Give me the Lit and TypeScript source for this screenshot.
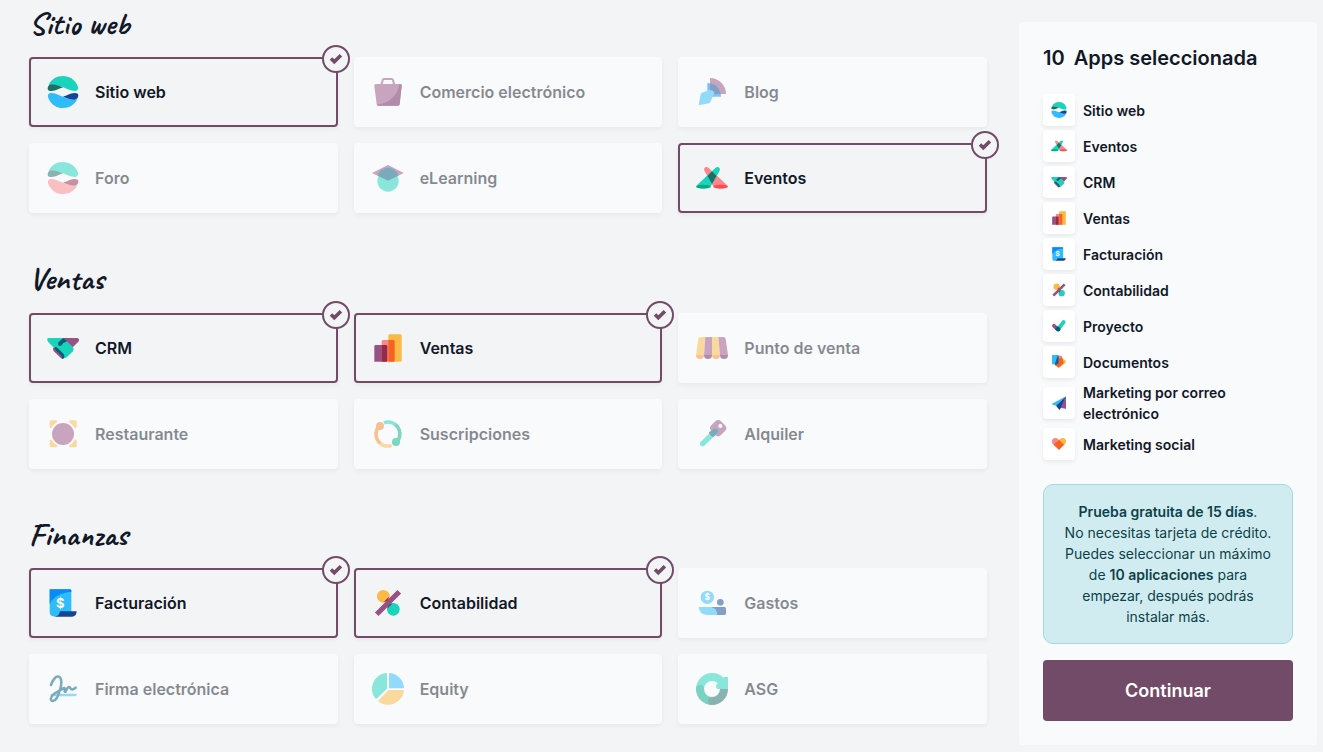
import { LitElement, html, css, svg, TemplateResult } from "lit";
import { customElement, property } from "lit/decorators.js";
import { classMap } from "lit/directives/class-map.js";

const PURPLE = "#985184";
const TEAL = "#1AD3BB";
const GREEN = "#00AC86";
const YELLOW = "#FBB945";
const BLUE = "#2EBCFA";
const AZURE = "#088BF5";
const NAVY = "#144496";
const PINK = "#FC868B";
const ORANGE = "#F86126";
const WINE = "#962B48";
const PETROL = "#005E7A";
const FOREST = "#1A6F66";

const globe = (bottom: string, shade: string) => {
  const dome =
    "M5 27C12 10 29 0 48 0s36 11 43 28c5 10 1 17-7 17C70 45 62 39 48 34 34 29 18 22 5 27z";
  const fold = "M2 38c0-8 5-13 12-13 12 0 22 5 34 9.500C36 37 27 44 14 45 6 45 2 43 2 38z";
  return svg`
    <path d=${dome} fill=${TEAL} /><path d=${fold} fill=${FOREST} />
    <g transform="rotate(180 48 48)"><path d=${dome} fill=${bottom} /><path d=${fold} fill=${shade} /></g>`;
};

const ICONS: Record<string, TemplateResult> = {
  website: globe(BLUE, NAVY),
  forum: globe(PINK, WINE),
  shop: svg`
    <path d="M28 28 32 12Q33 9 36 9H59Q62 9 63 12L67 28" fill="none" stroke=${PURPLE} stroke-width="6" />
    <path d="M11 24H85Q90 24 89 29L83 85Q82 89 78 89H19Q15 89 14 85L7 29Q7 24 11 24z" fill=${PURPLE} />
    <path d="M83 24H85Q90 24 89 29L83 85Q82 89 78 89H19Q15 89 14 86C49 84 77 60 83 24z" fill="#6B1F58" />`,
  blog: svg`
    <path d="M42 6A48 48 0 0 1 90 54H42z" fill=${PURPLE} />
    <path d="M34 21A41 41 0 0 1 75 62H34z" fill=${AZURE} />
    <path d="M42 22A41 41 0 0 1 74 54H42z" fill=${NAVY} />
    <path d="M8 88 14 54Q15 51 18 50L38 43Q51 40 55 50L43 78Q42 81 39 82z" fill=${BLUE} />`,
  learning: svg`
    <path d="M0 33 48 9 95 33 48 56z" fill=${PURPLE} />
    <circle cx="48" cy="57" r="32" fill=${TEAL} />
    <path d="M17 41.500A32 32 0 0 1 79 41.500L48 56z" fill=${PETROL} />`,
  events: svg`
    <path d="M25 26C21 16 32 11 38 18L95 71 53 75z" fill=${PINK} />
    <path d="M71 26C75 16 64 11 58 18L1 71 43 75z" fill=${TEAL} />
    <path d="M48 28 61.500 42 48 65 34.500 42z" fill=${FOREST} />
    <ellipse cx="74" cy="74" rx="22" ry="6" fill="#FF4A50" />
    <ellipse cx="22" cy="74" rx="22" ry="6" fill=${GREEN} />`,
  crm: svg`
    <path d="M46 18H90Q100 20 94 29L77 46z" fill=${PURPLE} />
    <path d="M25 53 46 73" stroke=${PURPLE} stroke-width="13" stroke-linecap="round" />
    <path d="M6 18H49L58 27 78 46Q83 52 78 58L60 75Q54 80 48 76L3 29Q-3 18 6 18z" fill=${TEAL} />
    <path d="M22 50 46 73" stroke=${PURPLE} stroke-width="7" stroke-linecap="round" />
    <path d="M27 49 47 69Q50 73 48 76" fill="none" stroke=${PETROL} stroke-width="8" stroke-linecap="round" />
    <path d="M49 18 60 28 48 34 44 40Q38 45 34 40 31 35 35 30z" fill=${PETROL} />`,
  sales: svg`
    <path d="M11 39H46V89H7V43Q7 39 11 39z" fill=${PURPLE} />
    <path d="M33 24H68V89H29V28Q29 24 33 24z" fill=${PINK} />
    <path d="M53 7H85Q89 7 89 11V85Q89 89 85 89H49V11Q49 7 53 7z" fill=${YELLOW} />
    <path d="M29 39H42Q46 39 46 43V85Q46 89 42 89H29z" fill=${WINE} />
    <path d="M49 24H64Q68 24 68 28V85Q68 89 64 89H49z" fill=${ORANGE} />`,
  pos: svg`
    <path d="M14 15H28L24 69H0L7 21Q8 15 14 15z" fill=${YELLOW} />
    <path d="M28 15H48V69H24z" fill=${PURPLE} /><path d="M48 15H67L72 69H48z" fill=${YELLOW} />
    <path d="M67 15H82Q88 15 89 21L96 69H72z" fill=${PURPLE} />
    <path d="M0 69H24A12 12 0 0 1 0 69z" fill="#FC8A2F" /><path d="M24 69H48A12 12 0 0 1 24 69z" fill="#6B1F58" />
    <path d="M48 69H72A12 12 0 0 1 48 69z" fill="#FC8A2F" /><path d="M72 69H96A12 12 0 0 1 72 69z" fill="#6B1F58" />`,
  restaurant: svg`
    <g fill=${YELLOW}>
      ${[0, 90, 180, 270].map(
        (a) => svg`<path transform="rotate(${a} 48.5 47.500)" d="M8 27V12Q8 7 13 7H28Q33 8 30 13 19 19 14 29 9 32 8 27z" />`
      )}
    </g>
    <circle cx="48" cy="48" r="33" fill=${PURPLE} />`,
  subscriptions: svg`
    <g fill="none" stroke-width="10.500">
      <path d="M36 14.500A35.500 35.500 0 0 1 72 21" stroke=${TEAL} />
      <path d="M70 20A35.500 35.500 0 0 1 75 71" stroke="#00B389" />
      <path d="M59 82A35.500 35.500 0 0 1 23 74" stroke=${YELLOW} />
      <path d="M25 76A35.500 35.500 0 0 1 21 25" stroke="#F58A2A" />
    </g>
    <circle cx="72" cy="72" r="12" fill="#00B389" /><circle cx="24" cy="24" r="12" fill="#F58A2A" />`,
  rental: svg`
    <rect x="46" y="10" width="41" height="41" rx="12" transform="rotate(45 66.500 30.500)" fill=${PURPLE} />
    <circle cx="73" cy="24" r="6" fill="#F9FAFC" />
    <path d="M20 77 58 40" stroke=${TEAL} stroke-width="16" stroke-linecap="round" />
    <path d="M39 43 53 33C63 28 71 39 63 47L52 57Q40 53 39 43z" fill=${PETROL} />`,
  invoicing: svg`
    <path d="M8 7H69Q73 7 73 11V76H41Q40 89 25 89 8 89 8 76z" fill=${BLUE} />
    <path d="M8 7H69Q73 7 73 11V15C42 16 18 30 8 51z" fill=${AZURE} />
    <path d="M39 73H89Q88 89 75 89H24Q37 87 39 73z" fill=${NAVY} />
    <text x="40" y="62" font-size="39" font-weight="700" text-anchor="middle" fill="#fff">$</text>`,
  accounting: svg`
    <circle cx="34" cy="28" r="19" fill=${YELLOW} /><circle cx="64" cy="67" r="19" fill=${TEAL} />
    <path d="M19.600 76.400 76.400 19.600" stroke=${PURPLE} stroke-width="15.500" stroke-linecap="square" />
    <path d="M35 45A19 19 0 0 0 51 29z" fill=${WINE} />
    <path d="M46 65A19 19 0 0 1 62 49z" fill="#3B5379" />`,
  expenses: svg`
    <circle cx="34" cy="31" r="20" fill=${BLUE} />
    <text x="34" y="40" font-size="25" font-weight="700" text-anchor="middle" fill="#fff">$</text>
    <circle cx="73" cy="46" r="10" fill=${NAVY} />
    <path d="M47 60H85Q90 60 90 65V79Q90 84 85 84H51z" fill=${NAVY} />
    <path d="M8 60H45Q63 63 64 84H33Q10 83 8 60z" fill=${BLUE} />`,
  sign: svg`
    <path d="M14 66H85" stroke=${BLUE} stroke-width="8" stroke-linecap="round" />
    <path d="M12 36C18 19 27 8 35 11 46 15 44 36 39 50 34 70 27 83 18 84 8 84 10 70 22 62L46 48Q54 42 53 49 52 58 56 56C60 45 66 39 69 44 72 52 78 50 86 44"
      fill="none" stroke=${PETROL} stroke-width="7.500" stroke-linecap="round" stroke-linejoin="round" />`,
  equity: svg`
    <path d="M45 3V44Q45 47 43 49L15 76Q13 78 10 76A47.500 47.500 0 0 1 42 0Q45 0 45 3z" fill=${TEAL} />
    <path d="M51 3Q51 0 54 0A48 48 0 0 1 96 43Q96 46 93 46H51z" fill=${BLUE} />
    <path d="M50 51H93Q96 51 96 54A48 48 0 0 1 20 86Q18 84 20 82z" fill=${YELLOW} />`,
  esg: svg`
    <path d="M48 12A36 36 0 0 0 12 48" fill="none" stroke=${TEAL} stroke-width="24" />
    <path d="M12 48A36 36 0 0 0 48 84" fill="none" stroke="#00AC86" stroke-width="24" />
    <path d="M48 84A36 36 0 0 0 84 48" fill="none" stroke=${FOREST} stroke-width="24" />
    <circle cx="48" cy="84" r="12" fill=${FOREST} /><circle cx="12" cy="48" r="12" fill="#00AC86" />
    <path d="M48 0C63 0 74 6 82 14Q88 9 96 13V48H66Q59 46 60 38L65 31Q59 24 48 24z" fill=${TEAL} />`,
  project: svg`
    <path d="M18 47 40 67" stroke=${PURPLE} stroke-width="23" stroke-linecap="round" />
    <path d="M43 67 76 24" stroke=${TEAL} stroke-width="23" stroke-linecap="round" />
    <path d="M29 60 39 50Q55 54 58 69L51 78Q43 85 34 77L24 67z" fill=${PETROL} />`,
  documents: svg`
    <path d="M46 84 86 54Q92 48 87 41L62 20z" fill=${YELLOW} />
    <path d="M40 14 58 10Q64 12 66 18L76 52Q77 56 73 59L46 82 22 66z" fill=${ORANGE} />
    <path d="M44 8 58 10Q64 12 66 20L44 30z" fill=${PINK} />
    <path d="M10 6H42Q46 6 46 11V52Q42 64 28 62H6V10Q6 6 10 6z" fill=${BLUE} />
    <path d="M38 14H46V54Q41 64 22 66z" fill="#235C87" />`,
  email: svg`
    <path d="M90 7 6 52Q5 55 8 57L30 65z" fill=${BLUE} />
    <path d="M90 7V80Q90 84 86 83L56 76z" fill=${PURPLE} />
    <path d="M90 7 30 65 50 88Q54 90 56 84z" fill=${NAVY} />`,
  social: svg`
    <path d="M48 24Q38 9 22 12C4 17 0 37 14 51L27 63 64 26z" fill=${PINK} />
    <path d="M48 24Q58 9 74 12C92 17 96 37 82 51L69 63 32 26z" fill=${YELLOW} />
    <path d="M48 22 78 52 50 82Q48 84 46 82L16 52z" fill=${ORANGE} />`,
};

interface App {
  icon: string;
  name: string;
  on?: boolean;
}

const GROUPS: { title: string; apps: App[] }[] = [
  {
    title: "Sitio web",
    apps: [
      { icon: "website", name: "Sitio web", on: true },
      { icon: "shop", name: "Comercio electrónico" },
      { icon: "blog", name: "Blog" },
      { icon: "forum", name: "Foro" },
      { icon: "learning", name: "eLearning" },
      { icon: "events", name: "Eventos", on: true },
    ],
  },
  {
    title: "Ventas",
    apps: [
      { icon: "crm", name: "CRM", on: true },
      { icon: "sales", name: "Ventas", on: true },
      { icon: "pos", name: "Punto de venta" },
      { icon: "restaurant", name: "Restaurante" },
      { icon: "subscriptions", name: "Suscripciones" },
      { icon: "rental", name: "Alquiler" },
    ],
  },
  {
    title: "Finanzas",
    apps: [
      { icon: "invoicing", name: "Facturación", on: true },
      { icon: "accounting", name: "Contabilidad", on: true },
      { icon: "expenses", name: "Gastos" },
      { icon: "sign", name: "Firma electrónica" },
      { icon: "equity", name: "Equity" },
      { icon: "esg", name: "ASG" },
    ],
  },
];

const SELECTED: App[] = [
  { icon: "website", name: "Sitio web" },
  { icon: "events", name: "Eventos" },
  { icon: "crm", name: "CRM" },
  { icon: "sales", name: "Ventas" },
  { icon: "invoicing", name: "Facturación" },
  { icon: "accounting", name: "Contabilidad" },
  { icon: "project", name: "Proyecto" },
  { icon: "documents", name: "Documentos" },
  { icon: "email", name: "Marketing por correo electrónico" },
  { icon: "social", name: "Marketing social" },
];

@customElement("app-icon")
export class AppIcon extends LitElement {
  @property() name = "";
  static styles = css`
    :host { display: block; flex: none; width: 32px; height: 32px; }
    svg { display: block; width: 100%; height: 100%; overflow: visible; }
    text { font-family: Inter, sans-serif; }
  `;
  render() {
    return html`<svg viewBox="0 0 96 96" aria-hidden="true">${ICONS[this.name]}</svg>`;
  }
}

@customElement("app-card")
export class AppCard extends LitElement {
  @property({ attribute: false }) app!: App;
  static styles = css`
    :host { display: block; min-width: 0; }
    .card {
      position: relative; box-sizing: border-box; height: 70px; padding: 0 16px;
      display: flex; align-items: center; border: 2px solid transparent; border-radius: 4px;
      background: #f9fafc; background-clip: border-box;
      box-shadow: 0 2px 4px rgba(0, 0, 0, 0.05);
    }
    .body { display: flex; align-items: center; gap: 16px; opacity: 0.5; }
    .name { font-size: 16px; line-height: 24px; font-weight: 600; color: #111827; white-space: nowrap; }
    .on { background: #f3f4f6; border-color: #714b67; }
    .on .body { opacity: 1; }
    .badge {
      position: absolute; top: -14px; right: -14px; box-sizing: border-box; width: 28px; height: 28px;
      border: 2px solid #714b67; border-radius: 50%; background: #f3f4f6;
    }
    .badge svg { display: block; width: 24px; height: 24px; }
  `;
  render() {
    const { icon, name, on } = this.app;
    return html`<div class=${classMap({ card: true, on: !!on })}>
      <div class="body"><app-icon name=${icon}></app-icon><span class="name">${name}</span></div>
      ${on
        ? html`<div class="badge">
            <svg viewBox="0 0 24 24"><path d="M7 11.500 10.300 14.700 16.900 8.300" fill="none" stroke="#714b67" stroke-width="3.600" /></svg>
          </div>`
        : null}
    </div>`;
  }
}

@customElement("app-root")
export class AppRoot extends LitElement {
  static styles = css`
    :host {
      display: flex; align-items: flex-start; box-sizing: border-box; width: 100%; height: 752px;
      overflow: hidden; padding-right: 6px; background: #f3f4f6; color: #111827;
      font-family: Inter, sans-serif;
    }
    main { flex: 1; min-width: 0; padding: 0 32px 0 29px; }
    section { height: 255.600px; }
    h3 {
      margin: 0; height: 57.300px; padding-top: 6.800px; box-sizing: border-box; white-space: nowrap;
      font: 700 32px/34px Caveat, cursive;
    }
    .grid { display: grid; grid-template-columns: repeat(3, minmax(0, 1fr)); gap: 16px; }
    aside {
      box-sizing: border-box; width: 298px; margin-top: 22px; padding: 24px; border-radius: 4px;
      background: #f9fafc;
    }
    h4 { display: flex; gap: 9px; margin: 0 0 24px; font-size: 20px; line-height: 24px; font-weight: 600; white-space: nowrap; }
    ul { list-style: none; margin: 0 0 24px; padding: 0; display: flex; flex-direction: column; gap: 4px; }
    li { display: flex; align-items: center; gap: 8px; font-size: 14px; line-height: 21px; font-weight: 600; }
    .tile {
      flex: none; width: 32px; height: 32px; display: grid; place-items: center; border-radius: 4px;
      background: #fff; box-shadow: 0 2px 4px rgba(0, 0, 0, 0.075);
    }
    .tile app-icon { width: 16px; height: 16px; }
    .note {
      box-sizing: border-box; height: 160px; padding: 16px; margin-bottom: 16px; border: 1px solid #a2dae0;
      border-radius: 10px; background: #d1ecf0; color: #0e4249; text-align: center;
      font-size: 14px; line-height: 21px;
    }
    .note b { font-weight: 600; }
    button {
      display: block; width: 100%; height: 61px; border: 0; border-radius: 4px; background: #714b67;
      color: #fff; font: 600 18px/27px Inter, sans-serif;
    }
  `;
  render() {
    return html`
      <main>
        ${GROUPS.map(
          (g) => html`<section>
            <h3>${g.title}</h3>
            <div class="grid">${g.apps.map((a) => html`<app-card .app=${a}></app-card>`)}</div>
          </section>`
        )}
      </main>
      <aside>
        <h4><span>10</span><span>Apps seleccionada</span></h4>
        <ul>
          ${SELECTED.map(
            (a) => html`<li><span class="tile"><app-icon name=${a.icon}></app-icon></span><span>${a.name}</span></li>`
          )}
        </ul>
        <div class="note">
          <b>Prueba gratuita de 15 días</b>.<br />No necesitas tarjeta de crédito.<br />Puedes seleccionar un máximo<br />de
          <b>10 aplicaciones</b> para<br />empezar, después podrás<br />instalar más.
        </div>
        <button>Continuar</button>
      </aside>
    `;
  }
}
